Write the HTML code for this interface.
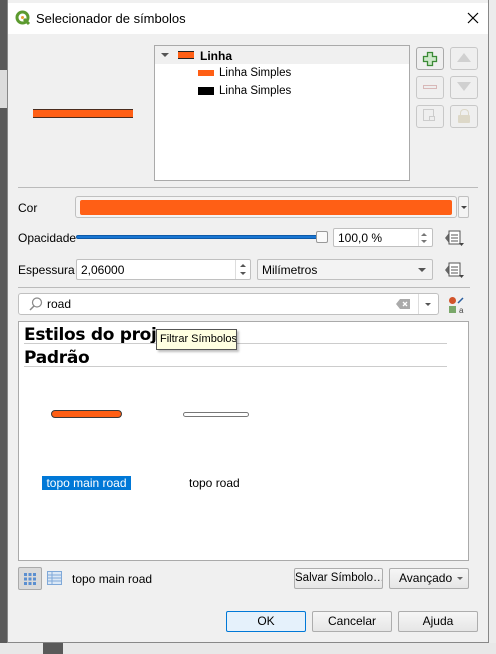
<!DOCTYPE html>
<html><head><meta charset="utf-8"><style>
*{box-sizing:border-box;margin:0;padding:0}
body{width:496px;height:654px;overflow:hidden;background:#f0f0f0;font-family:"Liberation Sans",sans-serif;font-size:12px;color:#000;position:relative}
.a{position:absolute;white-space:nowrap}
.btn{position:absolute;white-space:nowrap;overflow:hidden;border:1px solid #adadad;text-align:center;line-height:19px;font-size:12px;background:linear-gradient(#f6f6f6,#e6e6e6)}
.tb{position:absolute;border:1px solid #c8c8c8;border-radius:3px;background:#efefef}
.field{position:absolute;background:#fff;border:1px solid #c0c0c0;border-radius:2px}
</style></head><body>
<div class="a" style="left:0;top:0;width:7px;height:654px;background:#5a5a5a"></div>
<div class="a" style="left:0;top:70px;width:7px;height:38px;background:#dcdcdc"></div>
<div class="a" style="left:489px;top:0;width:7px;height:654px;background:#ececec"></div>
<div class="a" style="left:0;top:643px;width:496px;height:11px;background:#e8e8e8"></div>
<div class="a" style="left:43px;top:643px;width:20px;height:11px;background:#5a5a5a"></div>
<div class="a" style="left:7px;top:0;width:482px;height:643px;background:#f0f0f0;border:1px solid #888;border-top:none"></div>
<div class="a" style="left:8px;top:3px;width:480px;height:31px;background:#fff"></div>
<svg class="a" style="left:15px;top:10px" width="16" height="16" viewBox="0 0 16 16"><circle cx="7.5" cy="7.5" r="5.5" fill="none" stroke="#5c9a2f" stroke-width="3"/><path d="M9 9l5 5" stroke="#5c9a2f" stroke-width="3"/><circle cx="7.5" cy="7.5" r="1.5" fill="#e8a030"/></svg>
<div class="a" style="left:36px;top:11px;font-size:13px">Selecionador de símbolos</div>
<svg class="a" style="left:467px;top:12px" width="12" height="12"><path d="M1 1l10 10M11 1L1 11" stroke="#000" stroke-width="1.2"/></svg>

<div class="a" style="left:33px;top:109px;width:100px;height:9px;background:#ff5f15;border-top:1.5px solid #4a2c1e;border-bottom:1.5px solid #4a2c1e"></div>

<div class="a" style="left:154px;top:45px;width:256px;height:136px;background:#fff;border:1px solid #aaa"></div>
<div class="a" style="left:155px;top:46px;width:254px;height:18px;background:#f0f0f0"></div>
<div class="a" style="left:161px;top:53px;border-left:4px solid transparent;border-right:4px solid transparent;border-top:4px solid #555"></div>
<div class="a" style="left:178px;top:51px;width:16px;height:8px;background:#ff5f15;border-top:1px solid #222;border-bottom:1px solid #222"></div>
<div class="a" style="left:200px;top:49px;font-weight:bold">Linha</div>
<div class="a" style="left:198px;top:70px;width:16px;height:6px;background:#ff5f15"></div>
<div class="a" style="left:219px;top:67px;font-size:11.5px">Linha Simples</div>
<div class="a" style="left:198px;top:87px;width:16px;height:8px;background:#000"></div>
<div class="a" style="left:219px;top:85px;font-size:11.5px">Linha Simples</div>

<div class="tb" style="left:416px;top:47px;width:28px;height:23px;border-color:#aaa"></div>
<svg class="a" style="left:422px;top:51px" width="16" height="16"><path d="M5.5 1.5h5v4h4v5h-4v4h-5v-4h-4v-5h4z" fill="#cde8c9" stroke="#3a8a35" stroke-width="1.3"/></svg>
<div class="tb" style="left:450px;top:47px;width:28px;height:23px"></div>
<div class="a" style="left:457px;top:53px;border-left:7px solid transparent;border-right:7px solid transparent;border-bottom:9px solid #d0d0d0"></div>
<div class="tb" style="left:416px;top:76px;width:28px;height:23px"></div>
<div class="a" style="left:423px;top:85px;width:14px;height:4px;border:1px solid #d8b8b8;background:#eee"></div>
<div class="tb" style="left:450px;top:76px;width:28px;height:23px"></div>
<div class="a" style="left:457px;top:82px;border-left:7px solid transparent;border-right:7px solid transparent;border-top:9px solid #d0d0d0"></div>
<div class="tb" style="left:416px;top:105px;width:28px;height:23px"></div>
<div class="a" style="left:423px;top:109px;width:11px;height:12px;border:1.5px solid #ccc"></div>
<div class="a" style="left:429px;top:116px;width:6px;height:5px;border:1px solid #ccc;background:#eee"></div>
<div class="tb" style="left:450px;top:105px;width:28px;height:23px"></div>
<div class="a" style="left:458px;top:115px;width:12px;height:8px;background:#ddd8c8;border-radius:1px"></div>
<div class="a" style="left:460px;top:109px;width:9px;height:7px;border:1.5px solid #ddd8c8;border-bottom:none;border-radius:4px 4px 0 0"></div>

<div class="a" style="left:18px;top:187px;width:460px;height:1px;background:#bbb"></div>
<div class="a" style="left:18px;top:201px">Cor</div>
<div class="field" style="left:75px;top:196px;width:382px;height:22px;border-radius:3px;background:#f4f4f4"></div>
<div class="a" style="left:80px;top:200px;width:372px;height:15px;background:#ff5f15;border-radius:2px"></div>
<div class="field" style="left:458px;top:196px;width:11px;height:22px;background:#f4f4f4"></div>
<div class="a" style="left:461px;top:206px;border-left:3px solid transparent;border-right:3px solid transparent;border-top:3px solid #444"></div>

<div class="a" style="left:18px;top:231px">Opacidade</div>
<div class="a" style="left:76px;top:235px;width:243px;height:4px;background:#1976d2;border:1px solid #0e5aa8;border-radius:2px"></div>
<div class="a" style="left:316px;top:231px;width:12px;height:12px;background:#fafafa;border:1px solid #999;border-radius:2px"></div>
<div class="field" style="left:333px;top:228px;width:100px;height:19px"></div>
<div class="a" style="left:338px;top:231px">100,0 %</div>
<div class="a" style="left:418px;top:229px;width:1px;height:17px;background:#ddd"></div>
<div class="a" style="left:421px;top:233px;border-left:3px solid transparent;border-right:3px solid transparent;border-bottom:3px solid #777"></div>
<div class="a" style="left:421px;top:240px;border-left:3px solid transparent;border-right:3px solid transparent;border-top:3px solid #777"></div>
<svg class="a" style="left:442px;top:229px" width="24" height="18"><path d="M3 9l4-5v10z" fill="#666"/><rect x="7" y="2" width="11" height="13" fill="#fff" stroke="#555"/><path d="M9 6h7M9 9h7M9 12h7" stroke="#555"/><path d="M17 14h5l-2.5 3z" fill="#444"/></svg>

<div class="a" style="left:18px;top:263px">Espessura</div>
<div class="field" style="left:76px;top:259px;width:175px;height:21px"></div>
<div class="a" style="left:81px;top:263px">2,06000</div>
<div class="a" style="left:235px;top:260px;width:1px;height:19px;background:#ddd"></div>
<div class="a" style="left:240px;top:264px;border-left:3px solid transparent;border-right:3px solid transparent;border-bottom:3px solid #555"></div>
<div class="a" style="left:240px;top:272px;border-left:3px solid transparent;border-right:3px solid transparent;border-top:3px solid #555"></div>
<div class="field" style="left:257px;top:259px;width:176px;height:21px;background:#f3f3f3"></div>
<div class="a" style="left:262px;top:263px">Milímetros</div>
<div class="a" style="left:418px;top:268px;border-left:4px solid transparent;border-right:4px solid transparent;border-top:4px solid #555"></div>
<svg class="a" style="left:442px;top:261px" width="24" height="18"><path d="M3 9l4-5v10z" fill="#666"/><rect x="7" y="2" width="11" height="13" fill="#fff" stroke="#555"/><path d="M9 6h7M9 9h7M9 12h7" stroke="#555"/><path d="M17 14h5l-2.5 3z" fill="#444"/></svg>

<div class="a" style="left:18px;top:287px;width:452px;height:1px;background:#bbb"></div>
<div class="field" style="left:18px;top:293px;width:421px;height:22px;border-radius:3px"></div>
<svg class="a" style="left:28px;top:296px" width="16" height="16"><circle cx="9" cy="6.5" r="4.5" fill="none" stroke="#888" stroke-width="1.2"/><path d="M6 10l-4 4" stroke="#888" stroke-width="1.5"/></svg>
<div class="a" style="left:47px;top:297px">road</div>
<svg class="a" style="left:396px;top:299px" width="14" height="10"><path d="M4 0h10v10H4L0 5z" fill="#aaa"/><path d="M7 3l4 4M11 3l-4 4" stroke="#fff" stroke-width="1.3"/></svg>
<div class="a" style="left:418px;top:294px;width:1px;height:20px;background:#ddd"></div>
<div class="a" style="left:425px;top:303px;border-left:3.5px solid transparent;border-right:3.5px solid transparent;border-top:3.5px solid #555"></div>
<svg class="a" style="left:448px;top:296px" width="18" height="18"><circle cx="4.5" cy="4.5" r="3.5" fill="#d2542a"/><rect x="1" y="10" width="7" height="7" fill="#7aa86a"/><path d="M10 7l5-5" stroke="#2a5fa0" stroke-width="1.5"/><text x="11" y="17" font-size="8" font-family="Liberation Sans" fill="#444">a</text></svg>

<div class="a" style="left:18px;top:321px;width:451px;height:240px;background:#fff;border:1px solid #aaa"></div>
<div class="a" style="left:24px;top:325px;font-size:17px;font-weight:bold;font-family:'DejaVu Sans',sans-serif;letter-spacing:-0.3px">Estilos do proje</div>
<div class="a" style="left:24px;top:343px;width:423px;height:1px;background:#ccc"></div>
<div class="a" style="left:24px;top:348px;font-size:17px;font-weight:bold;font-family:'DejaVu Sans',sans-serif;letter-spacing:-0.3px">Padrão</div>
<div class="a" style="left:24px;top:366px;width:423px;height:1px;background:#ccc"></div>
<div class="a" style="left:156px;top:329px;width:81px;height:21px;background:#ffffe1;border:1px solid #555;box-shadow:2px 2px 2px rgba(0,0,0,.25);font-size:11px;line-height:19px;padding-left:3px;overflow:hidden">Filtrar Símbolos</div>
<div class="a" style="left:51px;top:410px;width:71px;height:8px;background:#ff5f15;border:1.3px solid #3a3a3a;border-radius:4px"></div>
<div class="a" style="left:183px;top:412px;width:66px;height:5px;background:#fff;border:1px solid #777;border-radius:3px"></div>
<div class="a" style="left:42px;top:476px;width:89px;height:14px;background:#0078d7;color:#fff;line-height:14px;text-align:center">topo main road</div>
<div class="a" style="left:189px;top:476px;line-height:14px">topo road</div>

<div class="a" style="left:18px;top:567px;width:24px;height:23px;border:1px solid #aaa;border-radius:2px;background:#dadada"></div>
<svg class="a" style="left:23px;top:572px" width="14" height="14"><g fill="#5b8fd0"><rect x="1" y="1" width="3" height="3"/><rect x="5.5" y="1" width="3" height="3"/><rect x="10" y="1" width="3" height="3"/><rect x="1" y="5.5" width="3" height="3"/><rect x="5.5" y="5.5" width="3" height="3"/><rect x="10" y="5.5" width="3" height="3"/><rect x="1" y="10" width="3" height="3"/><rect x="5.5" y="10" width="3" height="3"/><rect x="10" y="10" width="3" height="3"/></g></svg>
<svg class="a" style="left:47px;top:571px" width="15" height="14"><rect x="0.5" y="0.5" width="14" height="13" fill="#dbe8f6" stroke="#7fa8d8"/><path d="M1 4h13M1 7h13M1 10h13M5 1v12" stroke="#7fa8d8"/></svg>
<div class="a" style="left:72px;top:572px">topo main road</div>
<div class="btn" style="left:294px;top:568px;width:89px;height:21px;border-radius:2px;font-size:11.5px">Salvar Símbolo…</div>
<div class="btn" style="left:389px;top:568px;width:80px;height:21px;border-radius:2px;text-align:left;padding-left:9px">Avançado</div>
<div class="a" style="left:457px;top:577px;border-left:3px solid transparent;border-right:3px solid transparent;border-top:3px solid #666"></div>
<div class="btn" style="left:226px;top:611px;width:80px;height:21px;border:1px solid #0078d7;background:#e5f1fb;border-radius:2px">OK</div>
<div class="btn" style="left:312px;top:611px;width:80px;height:21px;border-radius:2px">Cancelar</div>
<div class="btn" style="left:398px;top:611px;width:80px;height:21px;border-radius:2px">Ajuda</div>
</body></html>
